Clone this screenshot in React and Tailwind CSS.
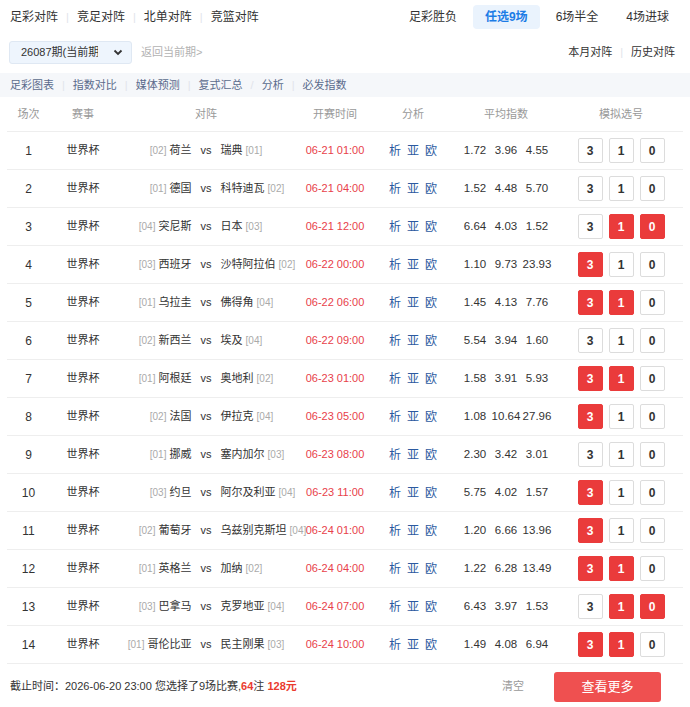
import React from 'react';

const font = { fontFamily: '"Liberation Sans", "Noto Sans CJK SC", sans-serif' };

const matches = [
  { no: 1, h: '荷兰', hr: '02', a: '瑞典', ar: '01', t: '06-21 01:00', o: ['1.72', '3.96', '4.55'], s: [] },
  { no: 2, h: '德国', hr: '01', a: '科特迪瓦', ar: '02', t: '06-21 04:00', o: ['1.52', '4.48', '5.70'], s: [] },
  { no: 3, h: '突尼斯', hr: '04', a: '日本', ar: '03', t: '06-21 12:00', o: ['6.64', '4.03', '1.52'], s: ['1', '0'] },
  { no: 4, h: '西班牙', hr: '03', a: '沙特阿拉伯', ar: '02', t: '06-22 00:00', o: ['1.10', '9.73', '23.93'], s: ['3'] },
  { no: 5, h: '乌拉圭', hr: '01', a: '佛得角', ar: '04', t: '06-22 06:00', o: ['1.45', '4.13', '7.76'], s: ['3', '1'] },
  { no: 6, h: '新西兰', hr: '02', a: '埃及', ar: '04', t: '06-22 09:00', o: ['5.54', '3.94', '1.60'], s: [] },
  { no: 7, h: '阿根廷', hr: '01', a: '奥地利', ar: '02', t: '06-23 01:00', o: ['1.58', '3.91', '5.93'], s: ['3', '1'] },
  { no: 8, h: '法国', hr: '02', a: '伊拉克', ar: '04', t: '06-23 05:00', o: ['1.08', '10.64', '27.96'], s: ['3'] },
  { no: 9, h: '挪威', hr: '01', a: '塞内加尔', ar: '03', t: '06-23 08:00', o: ['2.30', '3.42', '3.01'], s: [] },
  { no: 10, h: '约旦', hr: '03', a: '阿尔及利亚', ar: '04', t: '06-23 11:00', o: ['5.75', '4.02', '1.57'], s: ['3'] },
  { no: 11, h: '葡萄牙', hr: '02', a: '乌兹别克斯坦', ar: '04', t: '06-24 01:00', o: ['1.20', '6.66', '13.96'], s: ['3'] },
  { no: 12, h: '英格兰', hr: '01', a: '加纳', ar: '02', t: '06-24 04:00', o: ['1.22', '6.28', '13.49'], s: ['3', '1'] },
  { no: 13, h: '巴拿马', hr: '03', a: '克罗地亚', ar: '04', t: '06-24 07:00', o: ['6.43', '3.97', '1.53'], s: ['1', '0'] },
  { no: 14, h: '哥伦比亚', hr: '01', a: '民主刚果', ar: '03', t: '06-24 10:00', o: ['1.49', '4.08', '6.94'], s: ['3', '1'] },
];

const cols = 'grid grid-cols-[43px_66px_180px_78px_78px_108px_122px]';

const Sep = ({ ch = '|' }) => <span className="mx-[8px] text-[#e1e4ea] text-[11px]">{ch}</span>;

const App = () => {
  return (
    <div className="w-[690px] bg-white text-[#333]" style={font}>
      {/* top tabs */}
      <div className="flex items-center justify-between h-[34px] pl-[10px] pr-[9px]">
        <div className="flex items-center text-[12px] text-[#333]">
          <span>足彩对阵</span><Sep />
          <span>竞足对阵</span><Sep />
          <span>北单对阵</span><Sep />
          <span>竞篮对阵</span>
        </div>
        <div className="flex items-center gap-[4px] text-[12px]">
          <span className="px-[12px] leading-[24px]">足彩胜负</span>
          <span className="px-[12px] leading-[24px] bg-[#eaf3fd] text-[#1c7ce6] font-bold rounded-[4px]">任选9场</span>
          <span className="px-[12px] leading-[24px]">6场半全</span>
          <span className="px-[12px] leading-[24px]">4场进球</span>
        </div>
      </div>

      {/* period row */}
      <div className="flex items-center justify-between h-[36px] pl-[9px] pr-[15px]">
        <div className="flex items-center">
          <div className="w-[123px] h-[23px] flex items-center justify-between pl-[11px] pr-[7px] bg-[#eef5fd] border border-[#dfe8f3] rounded-[3px] text-[11px]">
            <span className="w-[77px] overflow-hidden whitespace-nowrap">26087期(当前期</span>
            <svg width="12" height="12" viewBox="0 0 12 12"><path d="M2.5 4.5 6 8l3.5-3.5" fill="none" stroke="#333" strokeWidth="1.8" /></svg>
          </div>
          <span className="ml-[9px] text-[11px] text-[#b2b2b2]">返回当前期&gt;</span>
        </div>
        <div className="flex items-center text-[11px]">
          <span>本月对阵</span><Sep />
          <span>历史对阵</span>
        </div>
      </div>

      {/* sub nav */}
      <div className="mt-[3px] h-[24px] bg-[#f5f7fa] flex items-center pl-[10px] text-[11px] text-[#5b6b8c]">
        <span>足彩图表</span><Sep />
        <span>指数对比</span><Sep />
        <span>媒体预测</span><Sep />
        <span>复式汇总</span><Sep ch="/" />
        <span>分析</span><Sep />
        <span>必发指数</span>
      </div>

      {/* table */}
      <div className="px-[7px]">
        <div className={`${cols} h-[35px] items-center text-[11px] text-[#999] border-b border-[#eee] text-center`}>
          <span>场次</span>
          <span>赛事</span>
          <span>对阵</span>
          <span>开赛时间</span>
          <span>分析</span>
          <span>平均指数</span>
          <span>模拟选号</span>
        </div>
        {matches.map((m) => (
          <div key={m.no} className={`${cols} h-[38px] items-center text-[11px] border-b border-[#eee]`}>
            <span className="text-center text-[12px]">{m.no}</span>
            <span className="text-center">世界杯</span>
            <div className="grid grid-cols-[minmax(0,1fr)_auto_minmax(0,1fr)] items-center whitespace-nowrap">
              <span className="text-right">
                <span className="text-[10px] text-[#aaa]">[{m.hr}]</span> {m.h}
              </span>
              <span className="mx-[9px]">vs</span>
              <span>
                {m.a} <span className="text-[10px] text-[#aaa]">[{m.ar}]</span>
              </span>
            </div>
            <span className="text-center text-[#e8414a]">{m.t}</span>
            <span className="flex justify-center gap-[6px] text-[#2c5aa0] text-[12px]">
              <span>析</span><span>亚</span><span>欧</span>
            </span>
            <span className="flex justify-center text-[11.5px]">
              {m.o.map((v, i) => (
                <span key={i} className="w-[31px] text-center">{v}</span>
              ))}
            </span>
            <span className="flex justify-center gap-[6px]">
              {['3', '1', '0'].map((k) => {
                const on = m.s.includes(k);
                return (
                  <span
                    key={k}
                    className={`w-[25px] h-[25px] flex items-center justify-center text-[12px] font-bold rounded-[2px] border ${
                      on ? 'bg-[#ea3b3b] border-[#ea3b3b] text-white' : 'bg-white border-[#dcdcdc] text-[#333]'
                    }`}
                  >
                    {k}
                  </span>
                );
              })}
            </span>
          </div>
        ))}
      </div>

      {/* footer */}
      <div className="flex items-center justify-between h-[43px] mt-[1px] pl-[10px] pr-[29px]">
        <div className="text-[11px] text-[#333]">
          截止时间：2026-06-20 23:00 您选择了9场比赛,<span className="text-[#ea3b2f] font-bold">64</span>注 <span className="text-[#ea3b2f] font-bold">128元</span>
        </div>
        <div className="flex items-center">
          <span className="text-[11px] text-[#999] mr-[30px]">清空</span>
          <button className="w-[107px] h-[30px] bg-[#ef5050] text-white text-[13px] rounded-[3px]">查看更多</button>
        </div>
      </div>
    </div>
  );
};

export default App;
